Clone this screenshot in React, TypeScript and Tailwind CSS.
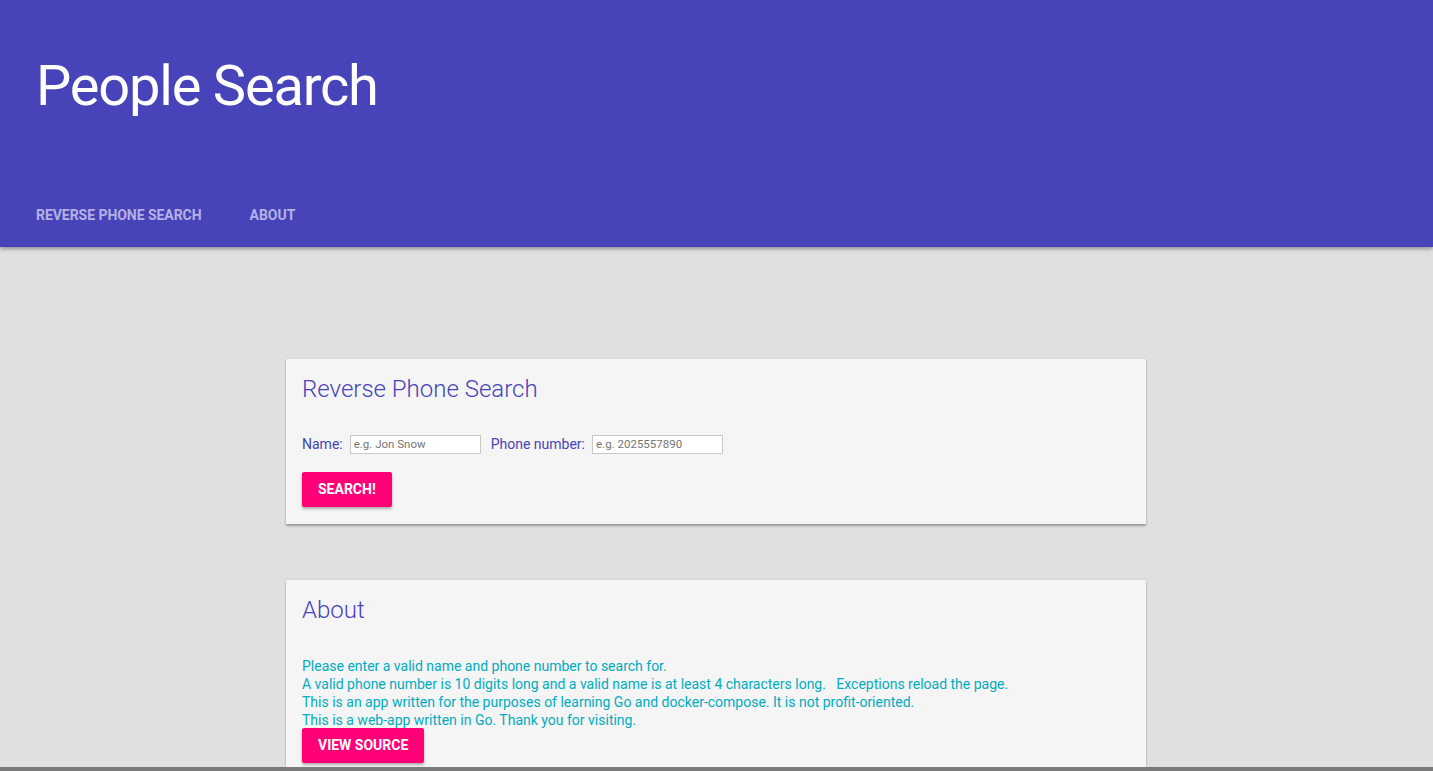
import React from "react";

const font = { fontFamily: "Roboto, 'Liberation Sans', sans-serif" };

export default function App() {
  return (
    <div
      className="flex h-[771px] w-full flex-col overflow-hidden bg-[#e0e0e0]"
      style={font}
    >
      <header className="relative z-10 flex h-[247px] shrink-0 flex-col bg-[#4743b9] px-[36px] shadow-[0_2px_4px_rgba(0,0,0,0.35)]">
        <h1 className="mt-[54px] text-[56px] leading-[64px] font-normal text-white tracking-[-1.2px]">
          People Search
        </h1>
        <nav className="mt-[87px] flex gap-[48px] text-[14px] leading-[20px] font-bold text-[#b4b1e6]">
          <span className="tracking-[-0.05px]">REVERSE PHONE SEARCH</span>
          <span>ABOUT</span>
        </nav>
      </header>

      <main className="flex flex-1 flex-col items-start overflow-hidden pt-[112px]">
        <section className="ml-[286px] w-[860px] shrink-0 bg-[#f5f5f5] px-[16px] pt-[16px] pb-[17px] shadow-[0_2px_2px_rgba(0,0,0,0.3),0_0_2px_rgba(0,0,0,0.1)]">
          <h2 className="text-[24px] leading-[28px] font-light text-[#4743b9]">
            Reverse Phone Search
          </h2>
          <div className="mt-[31px] flex h-[20px] items-center text-[14px] text-[#4743b9]">
            <label>Name:</label>
            <input
              className="ml-[7px] h-[19px] w-[131px] border border-[#c8c8c8] bg-white px-[3px] text-[11.5px] text-[#333] placeholder:text-[#757575] outline-none"
              placeholder="e.g. Jon Snow"
            />
            <label className="ml-[10px]">Phone number:</label>
            <input
              className="ml-[7px] h-[19px] w-[131px] border border-[#c8c8c8] bg-white px-[3px] text-[11.5px] text-[#333] placeholder:text-[#757575] outline-none"
              placeholder="e.g. 2025557890"
            />
          </div>
          <button className="mt-[18px] h-[35px] rounded-[2px] bg-[#ff0077] px-[16px] text-[14px] font-bold text-white shadow-[0_2px_3px_rgba(0,0,0,0.3)]">
            SEARCH!
          </button>
        </section>

        <section className="mt-[56px] ml-[286px] w-[860px] flex-1 shrink-0 bg-[#f5f5f5] px-[16px] pt-[16px] shadow-[0_2px_2px_rgba(0,0,0,0.3),0_0_2px_rgba(0,0,0,0.1)]">
          <h2 className="text-[24px] leading-[28px] font-light text-[#4743b9]">
            About
          </h2>
          <div className="mt-[33px] text-[14px] leading-[18px] text-[#00acc1]">
            <p>Please enter a valid name and phone number to search for.</p>
            <p className="whitespace-pre">
              A valid phone number is 10 digits long and a valid name is at least 4 characters long.   Exceptions reload the page.
            </p>
            <p>
              This is an app written for the purposes of learning Go and docker-compose. It is not profit-oriented.
            </p>
            <p>This is a web-app written in Go. Thank you for visiting.</p>
          </div>
          <button className="mt-[-1px] h-[35px] rounded-[2px] bg-[#ff0077] px-[16px] text-[14px] font-bold text-white shadow-[0_2px_3px_rgba(0,0,0,0.3)]">
            VIEW SOURCE
          </button>
        </section>
      </main>
      <div className="h-[4px] shrink-0 bg-[#7a7a7a]" />
    </div>
  );
}
